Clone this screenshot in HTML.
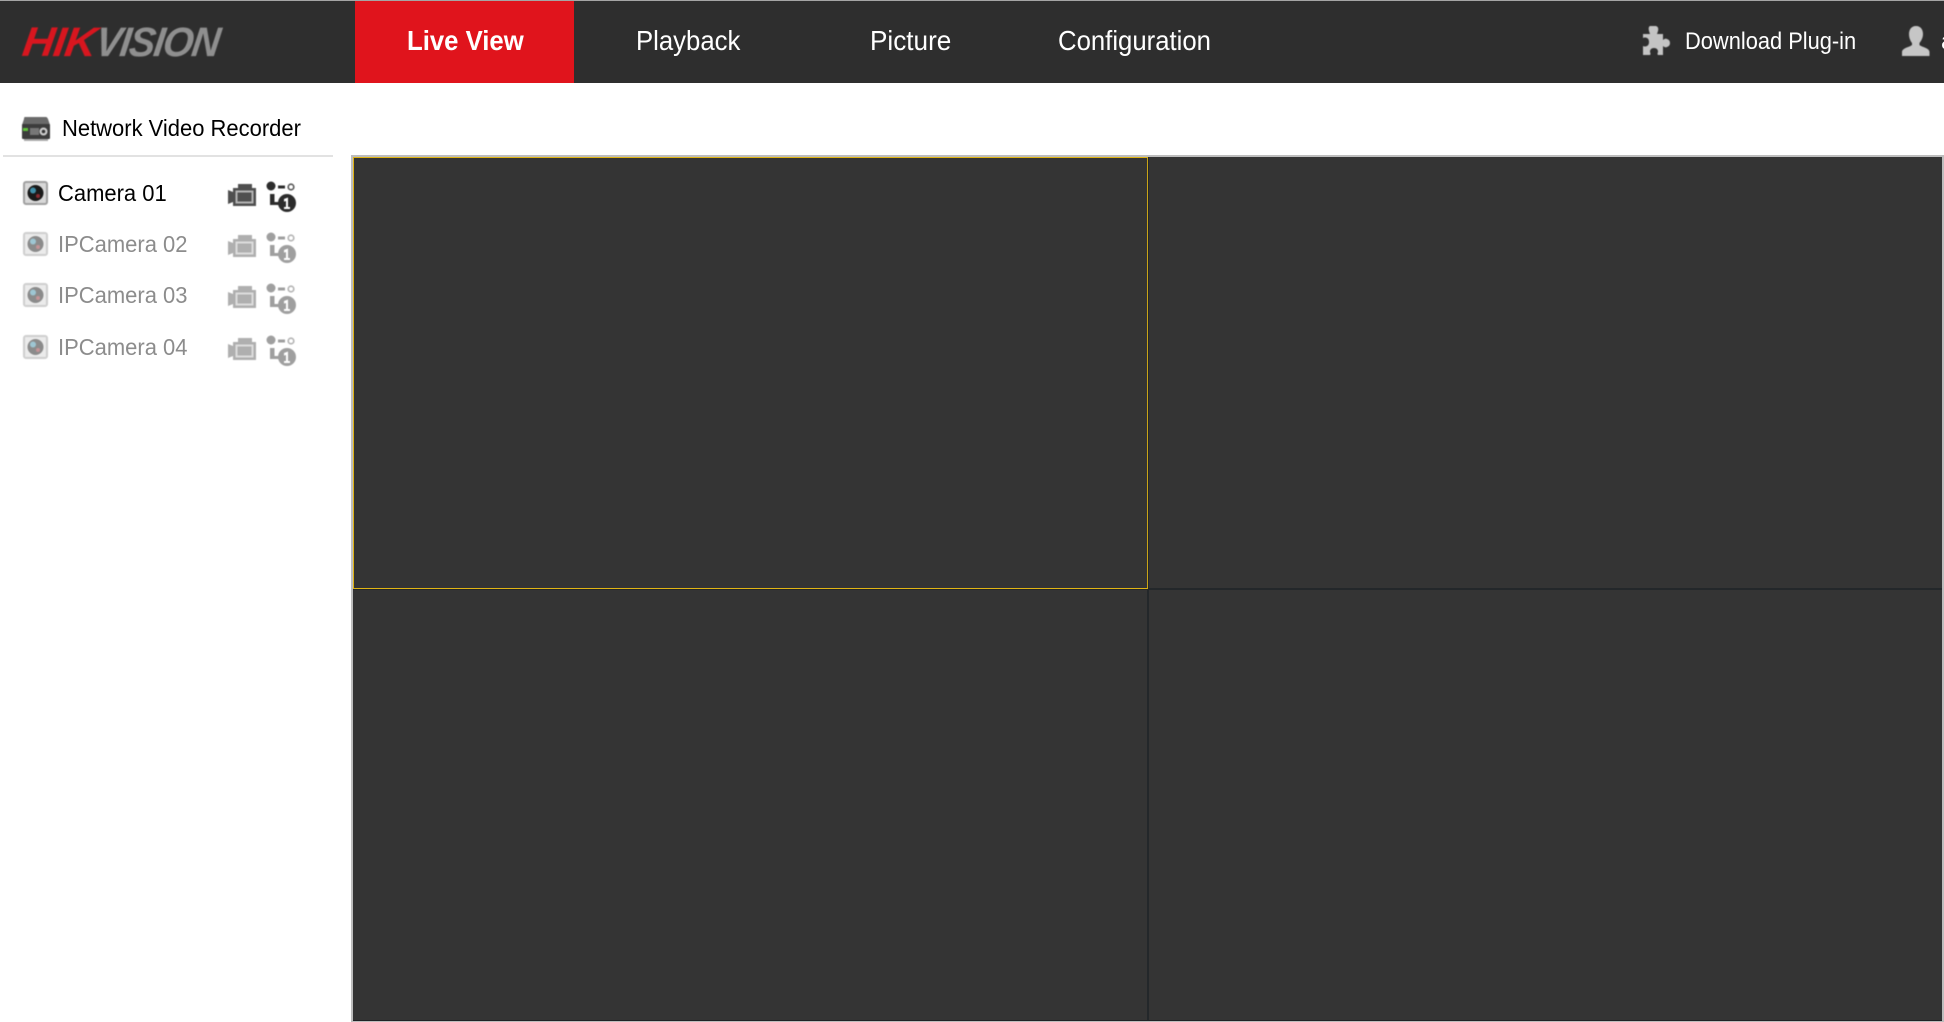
<!DOCTYPE html>
<html><head><meta charset="utf-8"><title>Live View</title>
<style>
html,body{margin:0;padding:0;width:1944px;height:1022px;overflow:hidden;background:#fff;font-family:"Liberation Sans",sans-serif}
.a{position:absolute;white-space:nowrap;transform-origin:0 50%}
svg{position:absolute;overflow:visible}
.blur{filter:blur(.6px)}
.nav{top:24px;font:27.5px/34px "Liberation Sans",sans-serif;color:#fff;transform:scaleX(.935)}
.cam{font:23.5px/32px "Liberation Sans",sans-serif;color:#8c8c8c;transform:scaleX(.935)}
</style></head><body>
<div class="a" style="left:0;top:0;width:1944px;height:83px;background:#2e2e2e"></div>
<div class="a" style="left:0;top:0;width:1944px;height:1px;background:#a5a5a5"></div>
<div class="a" style="left:355px;top:1px;width:219px;height:82px;background:#e0141c"></div>

<div class="a blur" style="left:23px;top:18px;font:italic bold 41px/48px 'Liberation Sans',sans-serif;color:#d8161f;transform:skewX(-8deg) scaleX(1.08);letter-spacing:-1px">HIK</div>
<div class="a blur" style="left:96px;top:18px;font:italic bold 41px/48px 'Liberation Sans',sans-serif;color:#8f8f8f;letter-spacing:-1.6px;transform:skewX(-8deg) scaleX(.95)">VISION</div>

<div class="a nav" style="left:407px;font-weight:bold">Live View</div>
<div class="a nav" style="left:636px">Playback</div>
<div class="a nav" style="left:870px;transform:scaleX(.95)">Picture</div>
<div class="a nav" style="left:1058px">Configuration</div>
<div class="a" style="left:1685px;top:26px;font:24px/32px 'Liberation Sans',sans-serif;color:#fff;transform:scaleX(.91)">Download Plug-in</div>
<div class="a" style="left:1941px;top:26px;font:24px/32px 'Liberation Sans',sans-serif;color:#fff">a</div>

<svg class="blur" style="left:1642px;top:26px" width="30" height="32" viewBox="0 0 30 32"><path fill="#c4c4c4" d="M8 0h6q3 1 2 5l-1 3h6v6q2-2 4-1 3 1 3 4t-3 4q-2 1-4-1v9h-5q-1-1 0-3 0-4-4-4t-4 4q1 2 0 3H1v-9q2 1 4 0 2-1 2-4t-2-4q-2-1-4 0V8h7l-1-3Q6 1 8 0z"/></svg>
<svg class="blur" style="left:1902px;top:26px" width="28" height="30" viewBox="0 0 28 30"><path fill="#c6c6c6" d="M14 0c5 0 7 4 7 8 0 4-2 7-3.500 9v2c2 2 10 3 10 7v4H0v-4c0-4 8-5 10-7v-2C8.500 15 7 12 7 8c0-4 2-8 7-8z"/></svg>

<svg class="blur" style="left:21px;top:116px" width="30" height="26" viewBox="0 0 30 26"><path fill="#6a6a6a" d="M4 1h21q1 0 2 2l2 6H1l2-6q0-2 1-2z"/><rect x="1" y="8" width="28" height="15" rx="1" fill="#3c3c3c"/><rect x="3" y="23" width="24" height="2" fill="#aaa"/><rect x="2" y="12" width="5" height="3" fill="#5fc23c"/><rect x="9" y="12" width="9" height="7" fill="#777"/><circle cx="22.500" cy="15.500" r="4" fill="#ccc"/><circle cx="22.500" cy="15.500" r="1.800" fill="#333"/></svg>
<div class="a" style="left:62px;top:112px;font:23px/32px 'Liberation Sans',sans-serif;color:#000;transform:scaleX(.955)">Network Video Recorder</div>
<div class="a" style="left:3px;top:155px;width:330px;height:2px;background:#e2e2e2"></div>

<!-- row 1 -->
<svg class="blur" style="left:23px;top:181px" width="25" height="24" viewBox="0 0 25 24"><rect x="1" y="1" width="23" height="22" rx="2" fill="#d8d8d8" stroke="#a0a0a0" stroke-width="2"/><circle cx="12.500" cy="12" r="8" fill="#1a1a1a"/><circle cx="10" cy="9.500" r="3" fill="#3f8ea8"/><circle cx="15" cy="15" r="2" fill="#8a2a30"/></svg>
<div class="a cam" style="left:58px;top:177px;color:#000">Camera 01</div>
<svg class="blur" style="left:228px;top:183px" width="29" height="24" viewBox="0 0 29 24"><path fill="#4f4f4f" d="M0 7l5 2V5h5V1h14v4h4v18H5v-4l-5 2z"/><rect x="8.500" y="8.500" width="16" height="11" fill="#4f4f4f" stroke="#b5b5b5" stroke-width="2"/></svg>
<svg class="blur" style="left:266px;top:182px" width="31" height="30" viewBox="0 0 31 30"><circle cx="5" cy="4" r="4.500" fill="#2c2c2c"/><rect x="12" y="3.500" width="7" height="3" fill="#2c2c2c"/><circle cx="25" cy="5" r="2.800" fill="none" stroke="#555" stroke-width="1.600"/><path fill="#2c2c2c" d="M4 12h4.500v8h4v3H4z"/><circle cx="21" cy="21" r="9" fill="#2c2c2c"/><path fill="#fff" d="M18 17l4-1.500V25h2v2h-6v-2h2v-6l-2 .6z"/></svg>

<!-- row 2 -->
<svg class="blur" style="left:23px;top:232px;opacity:.5" width="25" height="24" viewBox="0 0 25 24"><rect x="1" y="1" width="23" height="22" rx="2" fill="#d8d8d8" stroke="#a0a0a0" stroke-width="2"/><circle cx="12.500" cy="12" r="8" fill="#1a1a1a"/><circle cx="10" cy="9.500" r="3" fill="#3f8ea8"/><circle cx="15" cy="15" r="2" fill="#8a2a30"/></svg>
<div class="a cam" style="left:58px;top:228px">IPCamera 02</div>
<svg class="blur" style="left:228px;top:234px;opacity:.45" width="29" height="24" viewBox="0 0 29 24"><path fill="#4f4f4f" d="M0 7l5 2V5h5V1h14v4h4v18H5v-4l-5 2z"/><rect x="8.500" y="8.500" width="16" height="11" fill="#4f4f4f" stroke="#b5b5b5" stroke-width="2"/></svg>
<svg class="blur" style="left:266px;top:233px;opacity:.45" width="31" height="30" viewBox="0 0 31 30"><circle cx="5" cy="4" r="4.500" fill="#2c2c2c"/><rect x="12" y="3.500" width="7" height="3" fill="#2c2c2c"/><circle cx="25" cy="5" r="2.800" fill="none" stroke="#555" stroke-width="1.600"/><path fill="#2c2c2c" d="M4 12h4.500v8h4v3H4z"/><circle cx="21" cy="21" r="9" fill="#2c2c2c"/><path fill="#fff" d="M18 17l4-1.500V25h2v2h-6v-2h2v-6l-2 .6z"/></svg>

<!-- row 3 -->
<svg class="blur" style="left:23px;top:283px;opacity:.5" width="25" height="24" viewBox="0 0 25 24"><rect x="1" y="1" width="23" height="22" rx="2" fill="#d8d8d8" stroke="#a0a0a0" stroke-width="2"/><circle cx="12.500" cy="12" r="8" fill="#1a1a1a"/><circle cx="10" cy="9.500" r="3" fill="#3f8ea8"/><circle cx="15" cy="15" r="2" fill="#8a2a30"/></svg>
<div class="a cam" style="left:58px;top:279px">IPCamera 03</div>
<svg class="blur" style="left:228px;top:285px;opacity:.45" width="29" height="24" viewBox="0 0 29 24"><path fill="#4f4f4f" d="M0 7l5 2V5h5V1h14v4h4v18H5v-4l-5 2z"/><rect x="8.500" y="8.500" width="16" height="11" fill="#4f4f4f" stroke="#b5b5b5" stroke-width="2"/></svg>
<svg class="blur" style="left:266px;top:284px;opacity:.45" width="31" height="30" viewBox="0 0 31 30"><circle cx="5" cy="4" r="4.500" fill="#2c2c2c"/><rect x="12" y="3.500" width="7" height="3" fill="#2c2c2c"/><circle cx="25" cy="5" r="2.800" fill="none" stroke="#555" stroke-width="1.600"/><path fill="#2c2c2c" d="M4 12h4.500v8h4v3H4z"/><circle cx="21" cy="21" r="9" fill="#2c2c2c"/><path fill="#fff" d="M18 17l4-1.500V25h2v2h-6v-2h2v-6l-2 .6z"/></svg>

<!-- row 4 -->
<svg class="blur" style="left:23px;top:335px;opacity:.5" width="25" height="24" viewBox="0 0 25 24"><rect x="1" y="1" width="23" height="22" rx="2" fill="#d8d8d8" stroke="#a0a0a0" stroke-width="2"/><circle cx="12.500" cy="12" r="8" fill="#1a1a1a"/><circle cx="10" cy="9.500" r="3" fill="#3f8ea8"/><circle cx="15" cy="15" r="2" fill="#8a2a30"/></svg>
<div class="a cam" style="left:58px;top:331px">IPCamera 04</div>
<svg class="blur" style="left:228px;top:337px;opacity:.45" width="29" height="24" viewBox="0 0 29 24"><path fill="#4f4f4f" d="M0 7l5 2V5h5V1h14v4h4v18H5v-4l-5 2z"/><rect x="8.500" y="8.500" width="16" height="11" fill="#4f4f4f" stroke="#b5b5b5" stroke-width="2"/></svg>
<svg class="blur" style="left:266px;top:336px;opacity:.45" width="31" height="30" viewBox="0 0 31 30"><circle cx="5" cy="4" r="4.500" fill="#2c2c2c"/><rect x="12" y="3.500" width="7" height="3" fill="#2c2c2c"/><circle cx="25" cy="5" r="2.800" fill="none" stroke="#555" stroke-width="1.600"/><path fill="#2c2c2c" d="M4 12h4.500v8h4v3H4z"/><circle cx="21" cy="21" r="9" fill="#2c2c2c"/><path fill="#fff" d="M18 17l4-1.500V25h2v2h-6v-2h2v-6l-2 .6z"/></svg>

<!-- video grid -->
<div class="a" style="left:351px;top:155px;width:1593px;height:867px;background:#bdbdbd"></div>
<div class="a" style="left:353px;top:157px;width:1589px;height:863px;background:#343434"></div>
<div class="a" style="left:1147px;top:157px;width:2px;height:863px;background:#23272a"></div>
<div class="a" style="left:353px;top:588px;width:1589px;height:2px;background:#23272a"></div>
<div class="a" style="left:353px;top:1020px;width:1589px;height:1px;background:#1f2326"></div>
<div class="a" style="left:353px;top:157px;width:795px;height:432px;box-sizing:border-box;border:1px solid #e0b414;border-right-color:#c9a417"></div>
</body></html>
